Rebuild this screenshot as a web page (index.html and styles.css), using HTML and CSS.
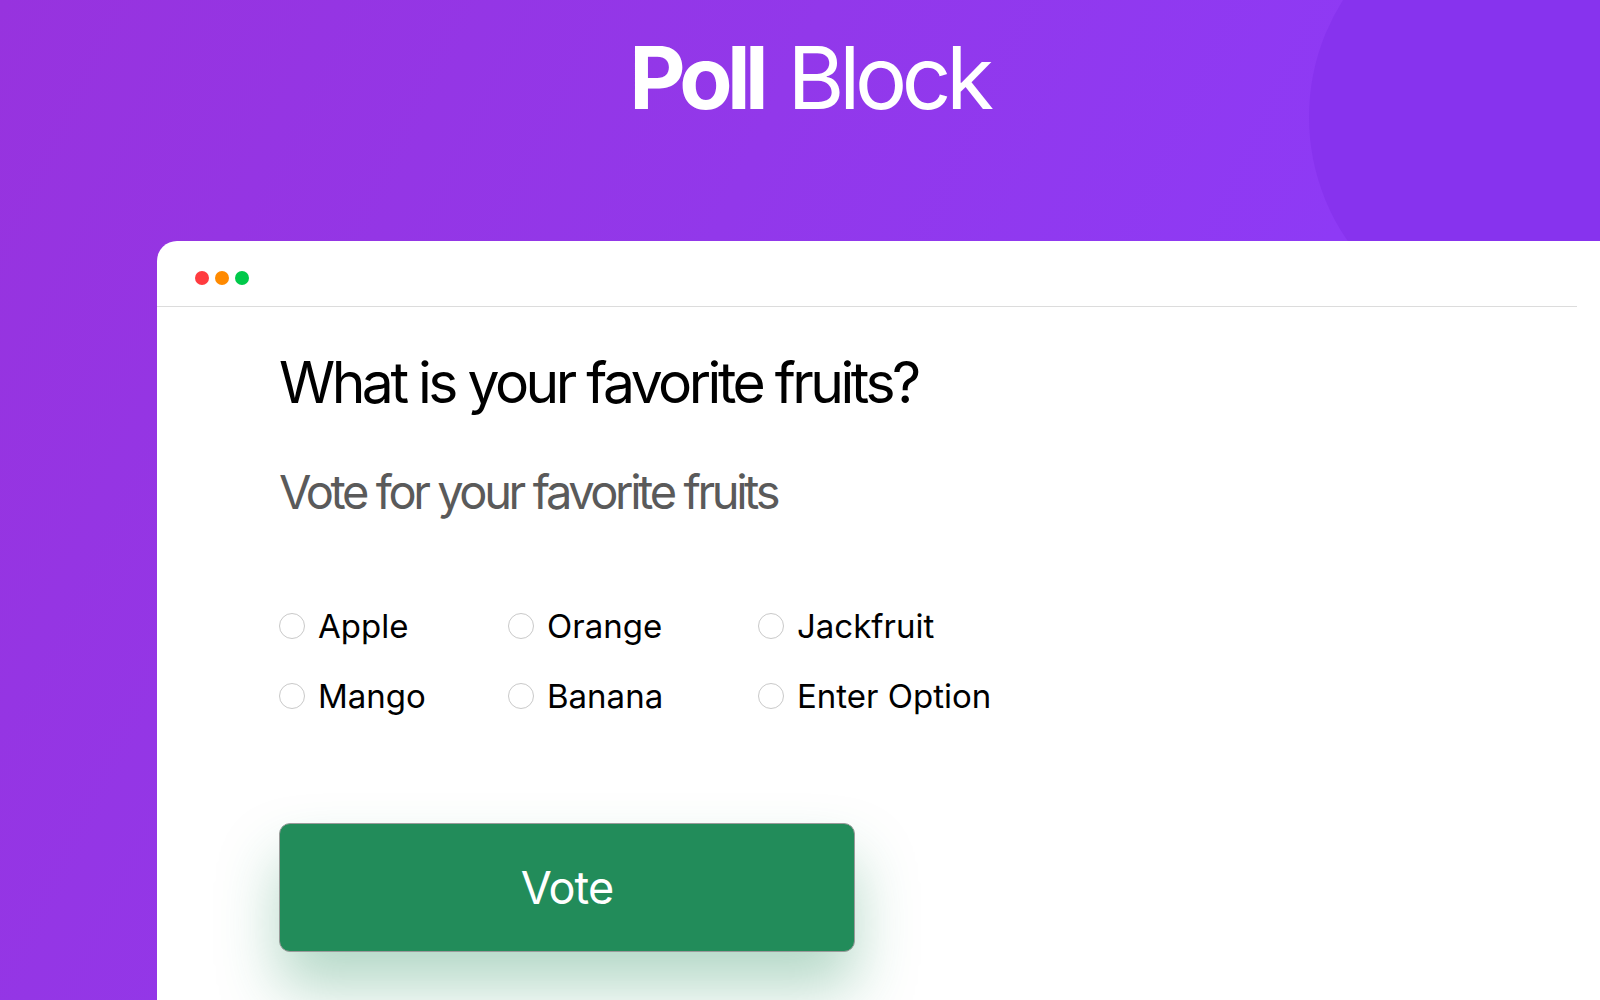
FILE: index.html
```html
<!DOCTYPE html>
<html lang="en">
<head>
<meta charset="utf-8">
<title>Poll Block</title>
<link rel="stylesheet" href="styles.css">
</head>
<body>
<div class="page">
  <div class="blob"></div>
  <h1 class="title"><span class="title-bold">Poll</span> <span class="title-light">Block</span></h1>
  <div class="card">
    <div class="card-header">
      <span class="dot dot-red"></span>
      <span class="dot dot-orange"></span>
      <span class="dot dot-green"></span>
    </div>
    <div class="card-body">
      <h2 class="question">What is your favorite fruits?</h2>
      <p class="subtitle">Vote for your favorite fruits</p>
      <div class="options">
        <label class="option"><span class="radio"></span><span class="option-text">Apple</span></label>
        <label class="option"><span class="radio"></span><span class="option-text">Orange</span></label>
        <label class="option"><span class="radio"></span><span class="option-text">Jackfruit</span></label>
        <label class="option"><span class="radio"></span><span class="option-text">Mango</span></label>
        <label class="option"><span class="radio"></span><span class="option-text">Banana</span></label>
        <label class="option"><span class="radio"></span><span class="option-text">Enter Option</span></label>
      </div>
      <button class="vote-btn" type="button">Vote</button>
    </div>
  </div>
</div>
</body>
</html>
```

FILE: styles.css
```css
* { box-sizing: border-box; }
html, body { margin: 0; padding: 0; }
body {
  width: 1600px;
  height: 1000px;
  overflow: hidden;
  font-family: Inter, "DejaVu Sans", sans-serif;
}
.page {
  position: relative;
  width: 1600px;
  height: 1000px;
  overflow: hidden;
  background: linear-gradient(115deg, #9733de 0%, #9238ea 40%, #8e3af5 70%, #8b3bf8 100%);
  padding-top: 34px;
}
.blob {
  position: absolute;
  left: 1309px;
  top: -101px;
  width: 436px;
  height: 436px;
  border-radius: 50%;
  background: #8733ee;
}
.title {
  position: relative;
  margin: 0;
  padding-left: 18px;
  text-align: center;
  font-size: 87px;
  line-height: 87px;
  color: #ffffff;
  font-weight: 400;
}
.title-bold { font-weight: 700; letter-spacing: -5.6px; }
.title-light { font-weight: 400; letter-spacing: -5.3px; }
.card {
  position: relative;
  margin-top: 120px;
  margin-left: 157px;
  width: 1500px;
  height: 800px;
  background: #ffffff;
  border-radius: 20px 0 0 0;
}
.card-header {
  height: 66px;
  margin-right: 80px;
  border-bottom: 1px solid #dcdcdc;
  padding: 30px 0 0 38px;
  display: flex;
  gap: 6px;
}
.dot {
  width: 14px;
  height: 14px;
  border-radius: 50%;
}
.dot-red { background: #ff3b3f; }
.dot-orange { background: #ff8a00; }
.dot-green { background: #00c94a; }
.card-body {
  padding: 42px 0 0 122px;
}
.question {
  margin: 0;
  font-size: 57px;
  line-height: 67px;
  font-weight: 400;
  letter-spacing: -3.5px;
  color: #000000;
}
.subtitle {
  margin: 48px 0 0 0;
  font-size: 47px;
  line-height: 56px;
  font-weight: 400;
  letter-spacing: -3.4px;
  color: #5a5a5a;
}
.options {
  margin-top: 86px;
  display: grid;
  grid-template-columns: 229px 250px auto;
  row-gap: 30px;
}
.option {
  display: flex;
  align-items: center;
  gap: 13px;
  height: 40px;
}
.radio {
  width: 26px;
  height: 26px;
  flex: none;
  border-radius: 50%;
  border: 1.5px solid #c9c9c9;
  background: #ffffff;
}
.option-text {
  font-size: 33px;
  line-height: 40px;
  color: #000000;
  letter-spacing: 0px;
}
.vote-btn {
  display: block;
  margin-top: 107px;
  width: 576px;
  height: 129px;
  border: 1.5px solid #9a9a9a;
  border-radius: 11px;
  background: #228c5a;
  color: #ffffff;
  font-family: Inter, "DejaVu Sans", sans-serif;
  font-size: 45px;
  font-weight: 400;
  letter-spacing: -1px;
  box-shadow: 0 36px 60px rgba(34, 140, 90, 0.34);
  cursor: pointer;
}
```
